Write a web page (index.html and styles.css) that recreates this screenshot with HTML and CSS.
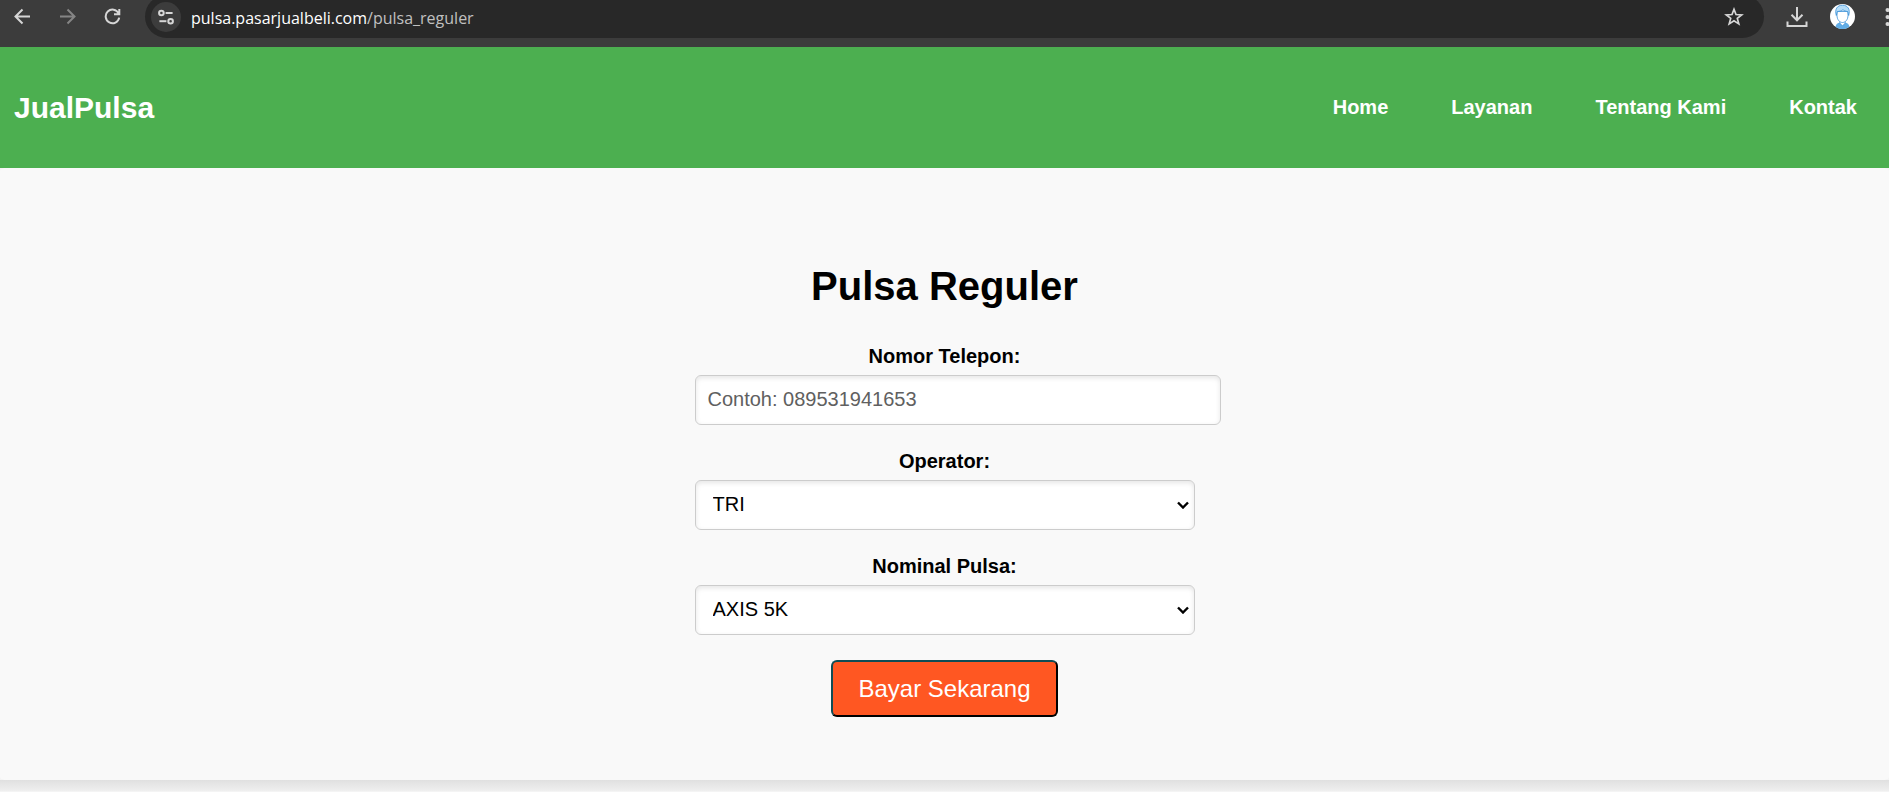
FILE: index.html
```html
<!DOCTYPE html>
<html lang="id">
  <head>
    <meta charset="UTF-8" />
    <meta name="viewport" content="width=device-width, initial-scale=1.0" />
    <title>Pulsa Reguler</title>
    <link rel="stylesheet" href="styles.css" />
  </head>
  <body>
    <div class="browser-bar">
      <div class="browser-row">
        <button class="bar-btn" aria-label="Back">
          <svg width="17" height="17" viewBox="0 0 17 17"><path d="M16 8.5H2M8.5 1.5l-7 7 7 7" /></svg>
        </button>
        <button class="bar-btn dim" aria-label="Forward">
          <svg width="17" height="17" viewBox="0 0 17 17"><path d="M1 8.5h14M8.5 1.5l7 7-7 7" /></svg>
        </button>
        <button class="bar-btn" aria-label="Reload">
          <svg width="17" height="17" viewBox="0 0 17 17"><path d="M14.6 5.4A6.8 6.8 0 1 0 15.2 9.6M15.3 1v5.3H10" /></svg>
        </button>
        <div class="address">
          <button class="site-info" aria-label="Site information">
            <svg width="18" height="18" viewBox="0 0 18 18">
              <circle cx="4.4" cy="5" r="2.3" /><path d="M8.6 5h7" />
              <circle cx="13.6" cy="13.2" r="2.3" /><path d="M2.4 13.2h7" />
            </svg>
          </button>
          <p class="url">pulsa.pasarjualbeli.com<span>/pulsa_reguler</span></p>
          <button class="bar-btn star" aria-label="Bookmark">
            <svg width="20" height="20" viewBox="0 0 20 20"><path d="M10 2.3l2 5.2 5.7.4-4.4 3.5 1.5 5.5L10 13.8l-4.8 3.1 1.5-5.5L2.3 7.9 8 7.5z" /></svg>
          </button>
        </div>
        <button class="bar-btn" aria-label="Downloads">
          <svg width="22" height="22" viewBox="0 0 22 22"><path d="M11 1v13M5.5 8.8l5.5 5.5 5.5-5.5M1.5 15.5V20h19v-4.5" /></svg>
        </button>
        <button class="bar-btn" aria-label="Profile">
          <svg class="avatar" width="25" height="25" viewBox="0 0 25 25">
            <circle cx="12.5" cy="12.5" r="12.5" fill="#fff" />
            <path d="M5.5 22.8c.4-2.6 2.3-3.6 4.3-4.2l2.7 2.4 2.7-2.4c2 .6 3.9 1.6 4.3 4.2a12.5 12.5 0 0 1-14 0z" fill="#62ade6" />
            <path d="M9.8 17.5V19l2.7 3 2.7-3v-1.5z" fill="#fff" stroke="#3a8fd6" stroke-width=".7" />
            <path d="M7 7.5v4c0 4 2.5 7 5.5 7s5.500-3 5.500-7v-4z" fill="#fff" stroke="#3a8fd6" stroke-width=".8" />
            <path d="M6.3 11.5C4.5 5.5 7 1.2 12.5 1.2s8 4.3 6.2 10.3l-1-4c-2.2-.2-3.7-.8-4.7-1.8-1.5 1.2-3.3 1.8-5.7 1.8z" fill="#b5ddf8" stroke="#3a8fd6" stroke-width=".8" />
          </svg>
        </button>
        <button class="bar-btn menu" aria-label="Menu">
          <svg class="dots" width="5" height="20" viewBox="0 0 5 20"><circle cx="2.5" cy="3" r="2" /><circle cx="2.5" cy="10" r="2" /><circle cx="2.5" cy="17" r="2" /></svg>
        </button>
      </div>
    </div>

    <header class="header">
      <div class="logo">JualPulsa</div>
      <nav class="nav">
        <a href="#">Home</a>
        <a href="#">Layanan</a>
        <a href="#">Tentang Kami</a>
        <a href="#">Kontak</a>
      </nav>
    </header>

    <main class="card">
      <h1>Pulsa Reguler</h1>
      <form class="form">
        <div class="form-group">
          <label for="nomor">Nomor Telepon:</label>
          <input type="text" id="nomor" placeholder="Contoh: 089531941653" />
        </div>
        <div class="form-group">
          <label for="operator">Operator:</label>
          <select id="operator">
            <option>TRI</option>
          </select>
        </div>
        <div class="form-group">
          <label for="nominal">Nominal Pulsa:</label>
          <select id="nominal">
            <option>AXIS 5K</option>
          </select>
        </div>
        <button type="button" class="pay-btn">Bayar Sekarang</button>
      </form>
    </main>
    <div class="page-end"></div>
  </body>
</html>
```

FILE: styles.css
```css
* {
  box-sizing: border-box;
}

body {
  margin: 0;
  font-family: Arial, "Liberation Sans", sans-serif;
  font-size: 20px;
  background-color: #f4f4f4;
}

h1,
p {
  margin: 0;
}

/* Browser toolbar */
.browser-bar {
  height: 47px;
  overflow: hidden;
  background-color: #3c3c3c;
}

.browser-row {
  display: flex;
  align-items: center;
  height: 43px;
  margin-top: -5px;
  padding-left: 14px;
}

.bar-btn,
.site-info {
  display: flex;
  flex: none;
  align-items: center;
  justify-content: center;
  padding: 0;
  border: none;
  background: none;
}

.browser-row > .bar-btn {
  margin-right: 28px;
}

.browser-bar svg {
  fill: none;
  stroke: #d6d6d6;
  stroke-width: 2;
}

.browser-bar .dim svg {
  stroke: #858585;
}

.browser-bar .star svg {
  stroke-width: 1.7;
}

.address {
  display: flex;
  flex: 1;
  align-items: center;
  height: 43px;
  margin: 0 22px 0 -4px;
  padding: 0 20px 0 6px;
  border-radius: 22px;
  background-color: #282828;
}

.site-info {
  width: 30px;
  height: 30px;
  border-radius: 50%;
  background-color: #3c3c3c;
}

.url {
  flex: 1;
  margin-left: 10px;
  padding-top: 2px;
  font-family: "Open Sans", "Noto Sans", sans-serif;
  font-size: 16px;
  color: #fff;
}

.url span {
  color: #c0c0c0;
}

.browser-bar .avatar {
  stroke: none;
}

.browser-row > .bar-btn:nth-last-child(3) {
  margin-right: 22px;
}

.browser-row > .bar-btn:nth-last-child(2) {
  margin-right: 30px;
}

.browser-row > .menu {
  margin-right: -1px;
}

.browser-bar .dots {
  fill: #d6d6d6;
  stroke: none;
}

/* Header */
.header {
  display: flex;
  align-items: center;
  justify-content: space-between;
  height: 121px;
  padding: 0 32px 0 14px;
  background-color: #4caf50;
  color: #fff;
}

.logo {
  font-size: 30px;
  font-weight: bold;
}

.nav {
  display: flex;
  gap: 63px;
}

.nav a {
  color: #fff;
  font-weight: bold;
  text-decoration: none;
}

/* Form card */
.card {
  padding: 63px 25px;
  border-radius: 6px / 3px;
  background-color: #f9f9f9;
  text-align: center;
}

/* Shadow under the card */
.page-end {
  height: 11px;
  background: linear-gradient(#e0e0e0, #efefef);
}

.card h1 {
  margin: 32px 0 35px;
  font-size: 40px;
  line-height: 46px;
}

.form {
  width: 500px;
  max-width: 100%;
  margin: 0 auto;
}

.form-group {
  margin-bottom: 24px;
}

.form-group label {
  display: block;
  margin-bottom: 7px;
  font-weight: bold;
  line-height: 24px;
}

.form-group input,
.form-group select {
  display: block;
  width: 100%;
  height: 50px;
  padding: 11px 17px 13px;
  border: 1px solid #ccc;
  border-radius: 6px;
  background-color: #fff;
  box-shadow: inset 0 2px 5px rgba(0, 0, 0, 0.1);
  color: #000;
  font-family: inherit;
  font-size: 20px;
}

.form-group input {
  box-sizing: content-box;
  height: 24px;
  padding: 11px 12px 13px;
}

.form-group input::placeholder {
  color: #606060;
}

.form-group select {
  appearance: none;
  background-image: url("data:image/svg+xml,%3Csvg xmlns='http://www.w3.org/2000/svg' width='12' height='8'%3E%3Cpath d='M1 1.5l5 5 5-5' fill='none' stroke='%23000' stroke-width='2.4'/%3E%3C/svg%3E");
  background-repeat: no-repeat;
  background-position: right 5px center;
}

.pay-btn {
  display: block;
  height: 57px;
  margin: 25px auto 0;
  padding: 0 25px;
  border: 2px solid #000;
  border-top-color: #0f4c54;
  border-left-color: #0f4c54;
  border-radius: 6px;
  background-color: #ff5722;
  color: #fff;
  font-family: inherit;
  font-size: 24px;
  cursor: pointer;
}
```
